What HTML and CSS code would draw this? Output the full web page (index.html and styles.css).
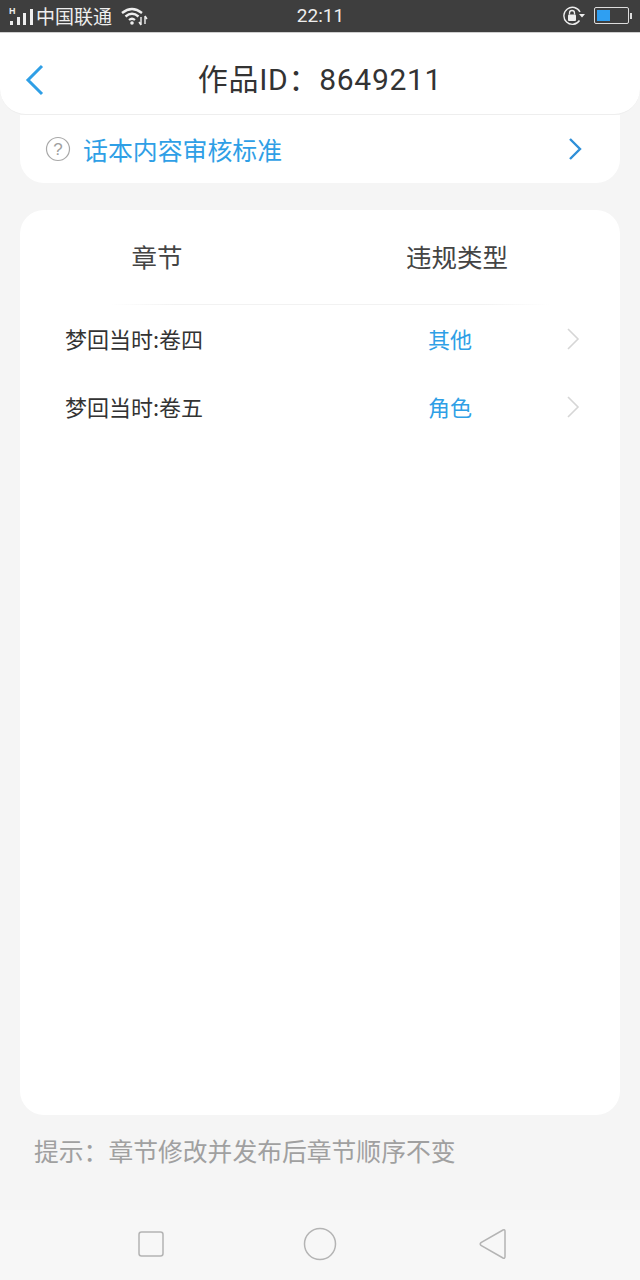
FILE: index.html
```html
<!DOCTYPE html>
<html lang="zh-CN">
<head>
    <meta charset="UTF-8">
    <meta name="viewport" content="width=device-width, initial-scale=1.0">
    <title>作品ID&#xFF1A;8649211</title>
    <link rel="stylesheet" href="styles.css">
</head>
<body>
    <div class="status-bar">
        <div class="status-left">
            <svg class="signal-icon" width="26" height="20" viewBox="0 0 26 20">
                <text x="0" y="8" class="signal-h">H</text>
                <rect x="1" y="15" width="3" height="4" fill="#eee"/>
                <rect x="8" y="11" width="3" height="8" fill="#eee"/>
                <rect x="14" y="7" width="3" height="12" fill="#eee"/>
                <rect x="21" y="3" width="3" height="16" fill="#eee"/>
            </svg>
            <span class="carrier">中国联通</span>
            <svg class="wifi-icon" width="27" height="20" viewBox="0 0 27 20">
                <path d="M1 7 Q11 -1 21 7" fill="none" stroke="#eee" stroke-width="2.4"/>
                <path d="M4.5 10.5 Q11 5 17.5 10.5" fill="none" stroke="#eee" stroke-width="2.4"/>
                <path d="M8 14 Q11 11.5 14 14" fill="none" stroke="#eee" stroke-width="2.2"/>
                <circle cx="11" cy="17" r="1.8" fill="#eee"/>
                <path d="M20 11v8M20 19l-2-3M24 10v8M24 10l2 3" fill="none" stroke="#eee" stroke-width="1.4"/>
            </svg>
        </div>
        <span class="clock">22:11</span>
        <div class="status-right">
            <svg width="24" height="20" viewBox="0 0 24 20">
                <path d="M17.5 14.5 A8.5 8.5 0 1 1 18 6" fill="none" stroke="#eee" stroke-width="1.4"/>
                <path d="M17 8 h6 l-3 3.5z" fill="#eee"/>
                <rect x="6" y="8.5" width="8" height="6.5" rx="1" fill="#eee"/>
                <path d="M7.5 8.5 V7 a2.5 2.5 0 0 1 5 0 V8.5" fill="none" stroke="#eee" stroke-width="1.3"/>
            </svg>
            <div class="battery">
                <div class="battery-level"></div>
            </div>
            <div class="battery-tip"></div>
        </div>
    </div>

    <div class="header">
        <svg class="back-icon" width="20" height="32" viewBox="0 0 20 32">
            <path d="M17 2 L3 16 L17 30" fill="none" stroke="#2f9fe6" stroke-width="3"/>
        </svg>
        <h1>作品ID&#xFF1A;8649211</h1>
    </div>

    <div class="notice">
        <svg width="26" height="26" viewBox="0 0 26 26">
            <circle cx="13" cy="13" r="11.5" fill="none" stroke="#a8a8a8" stroke-width="1.2"/>
            <text x="13" y="19" class="question">?</text>
        </svg>
        <span class="notice-text">话本内容审核标准</span>
        <svg class="notice-arrow" width="14" height="24" viewBox="0 0 14 24">
            <path d="M2 2 L12 12 L2 22" fill="none" stroke="#2f8fd8" stroke-width="2.4"/>
        </svg>
    </div>

    <div class="card">
        <div class="table-head">
            <span>章节</span>
            <span>违规类型</span>
        </div>
        <div class="divider"></div>
        <div class="row">
            <span class="chapter">梦回当时:卷四</span>
            <span class="type">其他</span>
            <svg width="14" height="24" viewBox="0 0 14 24">
                <path d="M2 2 L12 12 L2 22" fill="none" stroke="#d6d6d6" stroke-width="1.6"/>
            </svg>
        </div>
        <div class="row">
            <span class="chapter">梦回当时:卷五</span>
            <span class="type">角色</span>
            <svg width="14" height="24" viewBox="0 0 14 24">
                <path d="M2 2 L12 12 L2 22" fill="none" stroke="#d6d6d6" stroke-width="1.6"/>
            </svg>
        </div>
    </div>

    <p class="hint">提示&#xFF1A;章节修改并发布后章节顺序不变</p>

    <div class="nav-bar">
        <svg width="28" height="28" viewBox="0 0 28 28">
            <rect x="2" y="2" width="24" height="24" rx="2.5" fill="none" stroke="#b4b4b4" stroke-width="1.5"/>
        </svg>
        <svg width="34" height="34" viewBox="0 0 34 34">
            <circle cx="17" cy="17" r="15.5" fill="none" stroke="#b4b4b4" stroke-width="1.5"/>
        </svg>
        <svg class="nav-back" width="30" height="32" viewBox="0 0 30 32">
            <path d="M25 2 Q27 1 27 3.5 V28.5 Q27 31 25 30 L3 17.5 Q1.5 16 3 14.5 Z" fill="none" stroke="#b4b4b4" stroke-width="1.5"/>
        </svg>
    </div>
</body>
</html>
```

FILE: styles.css
```css
* {
    box-sizing: border-box;
}
body {
    font-family: "Noto Sans CJK SC", "Noto Sans", sans-serif;
    margin: 0;
    width: 640px;
    height: 1280px;
    display: flex;
    flex-direction: column;
    background-color: #f5f5f5;
    overflow: hidden;
}
.status-bar {
    height: 33px;
    flex: none;
    display: flex;
    align-items: center;
    justify-content: space-between;
    padding: 0 8px 1px 9px;
    background-color: #3e3e3e;
    border-bottom: 1px solid #cfcfcf;
    color: #eee;
}
.status-left {
    width: 200px;
    display: flex;
    align-items: center;
}
.signal-h {
    font-family: "Liberation Sans", sans-serif;
    font-size: 9px;
    font-weight: bold;
    fill: #eee;
}
.carrier {
    font-size: 19px;
    line-height: 24px;
    margin-left: 1px;
}
.wifi-icon {
    margin-left: 9px;
}
.clock {
    font-family: Roboto, sans-serif;
    font-size: 19px;
}
.status-right {
    width: 200px;
    display: flex;
    align-items: center;
    justify-content: flex-end;
}
.battery {
    width: 35px;
    height: 17px;
    margin-left: 8px;
    padding: 2px;
    border: 1px solid #ddd;
    border-radius: 2px;
}
.battery-level {
    width: 13px;
    height: 100%;
    background-color: #2f9ff2;
}
.battery-tip {
    width: 2px;
    height: 6px;
    margin-left: 1px;
    background-color: #ddd;
}
.header {
    height: 82px;
    flex: none;
    display: flex;
    align-items: center;
    justify-content: center;
    position: relative;
    background-color: #fff;
    border-bottom: 1px solid #eee;
    border-radius: 0 0 26px 26px;
}
.back-icon {
    position: absolute;
    left: 25px;
    top: 31px;
}
.header h1 {
    margin: 0;
    padding-top: 6px;
    font-size: 30px;
    font-weight: 400;
    color: #333;
    font-family: Roboto, "Noto Sans CJK SC", sans-serif;
    letter-spacing: 0.7px;
}
.notice {
    height: 68px;
    flex: none;
    margin: 0 20px;
    padding: 0 38px 0 25px;
    display: flex;
    align-items: center;
    background-color: #fff;
    border-radius: 0 0 24px 24px;
}
.question {
    font-family: "Liberation Sans", sans-serif;
    font-size: 17px;
    fill: #a0a0a0;
    text-anchor: middle;
}
.notice-text {
    margin-left: 12px;
    font-size: 24.9px;
    color: #2f9fe6;
}
.notice-arrow {
    margin-left: auto;
}
.card {
    flex: 1;
    margin: 27px 20px 0 20px;
    background-color: #fff;
    border-radius: 24px;
}
.table-head {
    height: 94px;
    padding-bottom: 3px;
    display: grid;
    grid-template-columns: 274px 326px;
    align-items: center;
    text-align: center;
    font-size: 25.5px;
    color: #444;
}
.divider {
    height: 1px;
    margin: 0 70px 0 90px;
    background: linear-gradient(to right, #fff, #f2f2f2 15%, #f2f2f2 85%, #fff);
}
.row {
    height: 68px;
    padding: 0 0 2px 45px;
    display: grid;
    grid-template-columns: 363px 44px 1fr;
    align-items: center;
    font-size: 22px;
}
.row svg {
    margin: 2px 0 0 94px;
}
.chapter {
    color: #333;
    white-space: nowrap;
}
.type {
    color: #2f9fe6;
    white-space: nowrap;
}
.hint {
    flex: none;
    height: 95px;
    margin: 0;
    padding: 17px 0 0 34px;
    font-size: 24.8px;
    line-height: 37px;
    color: #a0a0a0;
}
.nav-bar {
    height: 70px;
    flex: none;
    display: flex;
    align-items: center;
    gap: 138px;
    padding: 0 0 2px 137px;
    background-color: #f7f7f7;
}
.nav-back {
    margin-left: 3px;
}
```
